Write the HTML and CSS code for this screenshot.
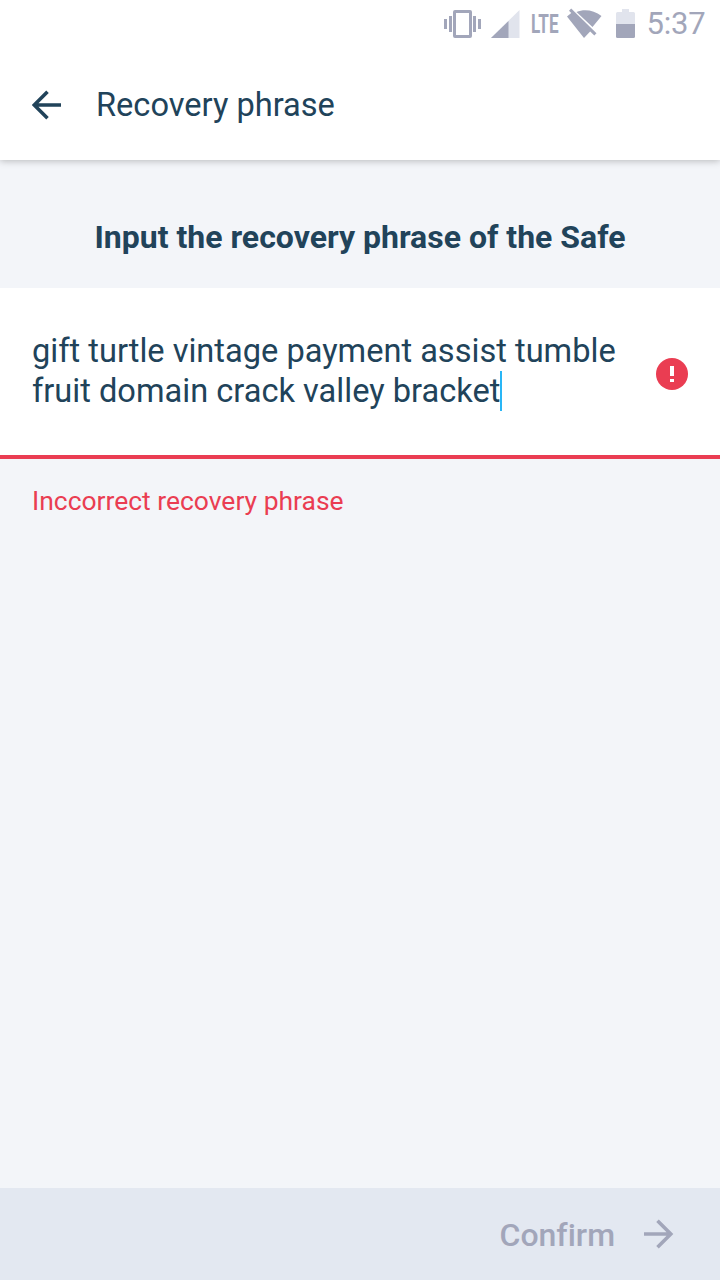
FILE: index.html
```html
<!DOCTYPE html>
<html lang="en">
<head>
<meta charset="utf-8">
<title>Recovery phrase</title>
<link rel="stylesheet" href="styles.css">
</head>
<body>
<div class="screen">
  <header class="top">
    <div class="status-bar">
      <svg class="status-icons" width="200" height="48" viewBox="440 0 200 48">
        <g fill="#a2a6ba">
          <path fill-rule="evenodd" d="M455 10h15a2 2 0 0 1 2 2v24a2 2 0 0 1-2 2h-15a2 2 0 0 1-2-2V12a2 2 0 0 1 2-2zm1 3v22h13V13z"/>
          <path d="M444 19h3v10h-3zM449 16h3v16h-3zM473 16h3v16h-3zM478 19h3v10h-3z"/>
          <path fill="#e1e4ed" d="M491 38l28.500-28V38z"/>
          <path d="M491 38l17.500-17V38z"/>
          <text class="network" x="531" y="33" textLength="27.500" lengthAdjust="spacingAndGlyphs">LTE</text>
          <path d="M567 16.500l5.500-4.500L591.500 30 584 38zM576.500 12c7.500-3.200 17.500-2 25 4L592.500 27z"/>
          <path d="M571.200 8.500l-2.200 2.200 25.300 24.800 2.200-2.200z"/>
          <path fill="#e1e4ed" d="M617.500 12h4.500V9h7v3h4.500a1.500 1.500 0 0 1 1.500 1.500V24h-19V13.500a1.500 1.500 0 0 1 1.500-1.500z"/>
          <path d="M616 24h19v12.500a1.500 1.500 0 0 1-1.500 1.500h-16a1.500 1.500 0 0 1-1.500-1.500z"/>
        </g>
      </svg>
      <span class="clock">5:37</span>
    </div>
    <div class="app-bar">
      <svg class="arrow" width="32" height="32" viewBox="0 0 32 32"><path d="M29 16H3M15.500 2.700L2.200 16l13.300 13.300"/></svg>
      <h1 class="title">Recovery phrase</h1>
    </div>
  </header>
  <main class="content">
    <h2 class="heading">Input the recovery phrase of the Safe</h2>
    <div class="field">
      <p class="phrase">gift turtle vintage payment assist tumble<br>fruit domain crack valley bracket<span class="caret"></span></p>
      <svg class="alert" width="32" height="32" viewBox="0 0 32 32"><circle cx="16" cy="16" r="16" fill="#ea3d52"/><path fill="#fff" d="M14 8h4v10h-4zM14 21h4v3h-4z"/></svg>
    </div>
    <p class="error">Inccorrect recovery phrase</p>
  </main>
  <footer class="bottom-bar">
    <span class="confirm">Confirm</span>
    <svg class="arrow" width="32" height="32" viewBox="0 0 32 32"><path d="M2 16h26M15.500 2.700L28.800 16 15.500 29.300"/></svg>
  </footer>
</div>
</body>
</html>
```
FILE: styles.css
```css
* { box-sizing: border-box; }
body, h1, h2, p { margin: 0; }
body { font-family: Roboto, "Liberation Sans", sans-serif; color: #21435a; font-variant-ligatures: none; }
.screen { width: 720px; height: 1280px; display: flex; flex-direction: column; background: #f3f5f9; overflow: hidden; }
.top { height: 160px; background: #fff; box-shadow: 0 1px 7px rgba(0, 0, 0, .25); flex: none; }
.status-bar { height: 48px; display: flex; justify-content: flex-end; padding-right: 14px; }
.network { font-size: 25px; font-weight: 700; }
.clock { width: 66px; padding-left: 6.500px; line-height: 48px; font-size: 31px; letter-spacing: -.2px; color: #a2a6ba; white-space: nowrap; }
.app-bar { height: 112px; display: flex; align-items: center; padding: 1px 32px 0; gap: 32px; }
.arrow { display: block; flex: none; fill: none; stroke: currentColor; stroke-width: 3.6; }
.title { padding-top: 1px; font-size: 32.6px; font-weight: 400; line-height: 40px; }
.content { flex: 1; }
.heading { height: 128px; padding-top: 57px; text-align: center; font-size: 32px; font-weight: 700; line-height: 40px; }
.field { height: 171px; display: flex; justify-content: space-between; align-items: center; padding: 4px 32px 0; background: #fff; border-bottom: 4px solid #ea3d52; }
.phrase { padding-bottom: 6px; font-size: 32.6px; line-height: 40px; white-space: nowrap; }
.caret { display: inline-block; width: 2px; height: 40px; vertical-align: top; background: #29b6f6; }
.error { padding: 26px 32px; font-size: 26.45px; line-height: 32px; color: #ea3d52; }
.bottom-bar { height: 92px; display: flex; justify-content: flex-end; align-items: center; gap: 27px; padding: 0 46px 0 0; background: #e3e8f1; color: #a2a6ba; }
.confirm { padding-top: 1px; font-size: 32px; font-weight: 500; }
```
